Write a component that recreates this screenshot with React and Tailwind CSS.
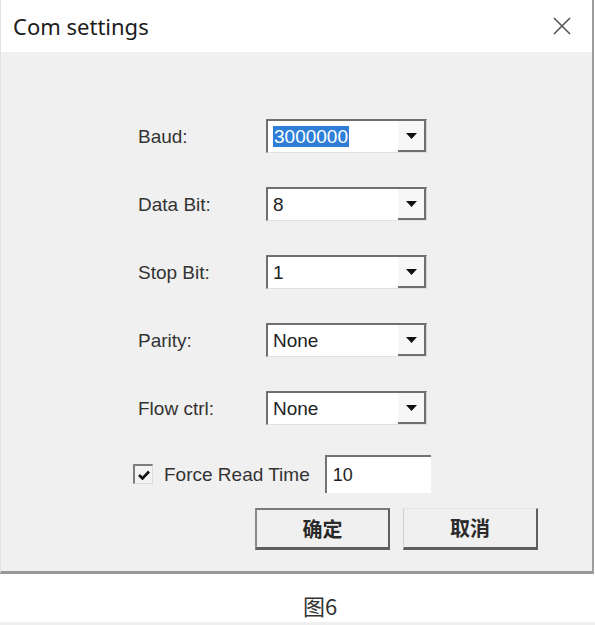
import React from 'react';

const uiFont = { fontFamily: '"Liberation Sans", "Noto Sans CJK SC", sans-serif' };
const cjkFont = { fontFamily: '"Noto Sans CJK SC", "Noto Sans", sans-serif' };

const fields = [
  { label: 'Baud:', value: '3000000', selected: true },
  { label: 'Data Bit:', value: '8' },
  { label: 'Stop Bit:', value: '1' },
  { label: 'Parity:', value: 'None' },
  { label: 'Flow ctrl:', value: 'None' },
];

// classic win32 combo box
const Combo = ({ value, selected }) => (
  <div className="flex h-[34px] w-[161px] border-t-2 border-l-2 border-r border-b border-t-[#6f6f6f] border-l-[#6f6f6f] border-r-[#d4d4d4] border-b-[#e2e2e2] bg-white">
    <div className="flex flex-1 items-center pl-[5px]">
      <span
        className={
          selected
            ? 'bg-[#2f7fd8] px-[1px] text-[19px] leading-[21px] text-white'
            : 'text-[19px] leading-[21px] text-[#222]'
        }
      >
        {value}
      </span>
    </div>
    <div className="flex w-[28px] items-center justify-center border-r-2 border-b-2 border-[#707070] bg-[#f7f7f7]">
      <svg width="11" height="6" viewBox="0 0 11 6">
        <path d="M0 0 L11 0 L5.5 6 Z" fill="#111" />
      </svg>
    </div>
  </div>
);

const Btn = ({ children, isDefault }) => (
  <div
    className={
      'flex h-[42px] w-[135px] items-center justify-center bg-[#f0f0f0] border-b-[3px] border-r-2 border-b-[#5f5f5f] border-r-[#5f5f5f] ' +
      (isDefault
        ? 'border-t-2 border-l-2 border-t-[#7a7a7a] border-l-[#8a8a8a]'
        : 'border-t border-l border-t-[#e4e4e4] border-l-[#d0d0d0]')
    }
  >
    <span className="text-[20px] font-bold leading-none text-[#2a2a2a]" style={cjkFont}>
      {children}
    </span>
  </div>
);

export default function App() {
  return (
    <div className="flex h-[625px] w-[595px] flex-col bg-white" style={uiFont}>
      <div className="flex h-[576px] w-[594px] flex-col border-l border-r-2 border-b-[3px] border-l-[#e2e2e2] border-r-[#9c9c9c] border-b-[#979797] bg-[#f0f0f0]">
        {/* title bar */}
        <div className="flex h-[52px] items-center justify-between bg-white pl-[12px] pr-[21px]">
          <span
            className="text-[22px] leading-none text-[#1c1c1c]"
            style={{ fontFamily: '"Noto Sans", "Open Sans", sans-serif' }}
          >
            Com settings
          </span>
          <svg width="18" height="18" viewBox="0 0 18 18">
            <path d="M1 1 L17 17 M17 1 L1 17" stroke="#555" strokeWidth="1.6" />
          </svg>
        </div>

        {/* body */}
        <div className="flex flex-col pl-[137px] pt-[67px]">
          <div className="flex flex-col gap-[34px]">
            {fields.map((f) => (
              <div key={f.label} className="flex items-center">
                <span className="w-[128px] text-[19px] leading-none text-[#333]">{f.label}</span>
                <Combo value={f.value} selected={f.selected} />
              </div>
            ))}
          </div>

          <div className="ml-[-5px] mt-[30px] flex items-center">
            <div className="flex h-[20px] w-[20px] items-center justify-center border-t-2 border-l-2 border-r border-b border-t-[#7d7d7d] border-l-[#7d7d7d] border-r-[#dcdcdc] border-b-[#dcdcdc] bg-[#f3f3f3]">
              <svg width="12" height="10" viewBox="0 0 12 10">
                <path d="M1 5 L4.5 8.5 L11 1.5" stroke="#111" strokeWidth="2.6" fill="none" />
              </svg>
            </div>
            <span className="ml-[11px] text-[19px] leading-none text-[#333]">Force Read Time</span>
            <div className="ml-[15px] flex h-[38px] w-[106px] items-center border-t-2 border-l-2 border-t-[#727272] border-l-[#727272] bg-white pl-[6px]">
              <span className="text-[18px] leading-none text-[#222]">10</span>
            </div>
          </div>

          <div className="ml-[117px] mt-[15px] flex gap-[13px]">
            <Btn isDefault>确定</Btn>
            <Btn>取消</Btn>
          </div>
        </div>
      </div>

      {/* caption */}
      <div className="flex-1 pl-[303px] pt-[17px]">
        <span className="text-[22px] leading-[28px] text-[#333]" style={cjkFont}>
          图6
        </span>
      </div>
      <div className="h-[3px] bg-[#efefef]" />
    </div>
  );
}
